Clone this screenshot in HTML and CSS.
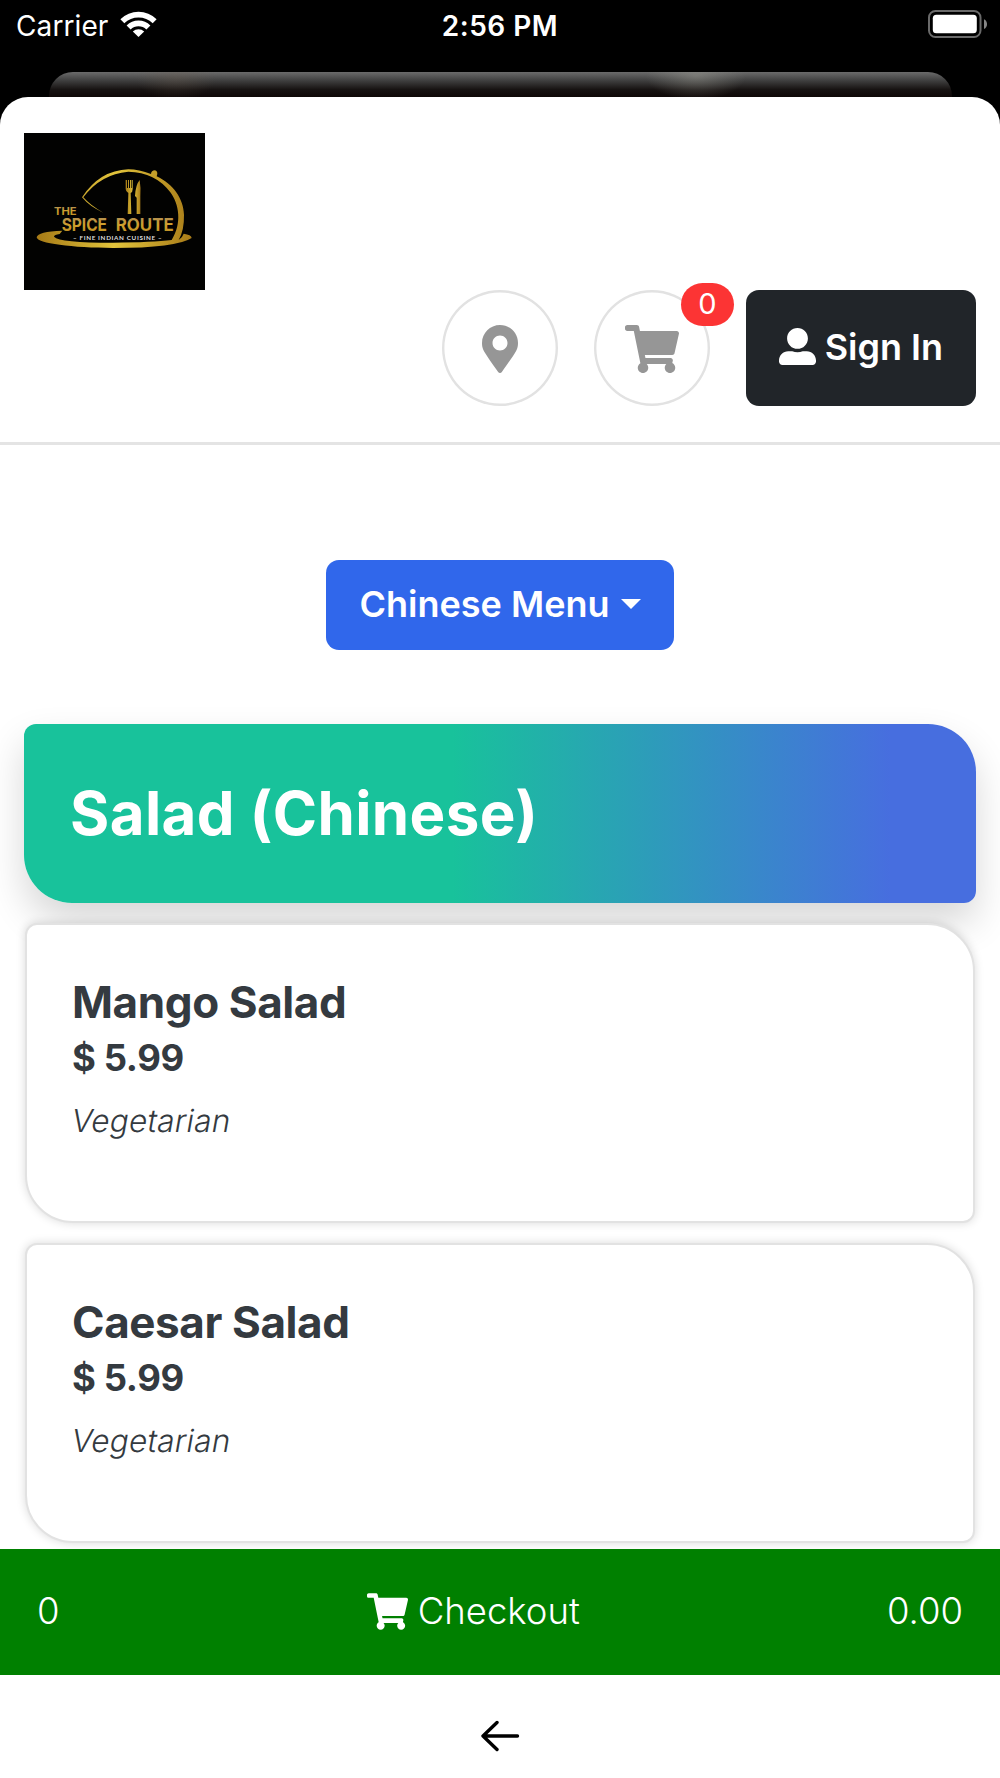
FILE: index.html
```html
<!DOCTYPE html>
<html lang="en">
<head>
<meta charset="utf-8">
<title>The Spice Route</title>
<link rel="stylesheet" href="styles.css">
</head>
<body>
<svg class="defs" aria-hidden="true">
  <symbol id="cart" viewBox="0 0 576 512"><path d="M528.12 301.319l47.273-208C578.806 78.301 567.391 64 551.99 64H159.208l-9.166-44.81C147.758 8.021 137.93 0 126.529 0H24C10.745 0 0 10.745 0 24v16c0 13.255 10.745 24 24 24h69.883l70.248 343.435C147.325 417.1 136 435.222 136 456c0 30.928 25.072 56 56 56s56-25.072 56-56c0-15.674-6.447-29.835-16.824-40h209.647C430.447 426.165 424 440.326 424 456c0 30.928 25.072 56 56 56s56-25.072 56-56c0-22.172-12.888-41.332-31.579-50.405l5.517-24.276c3.413-15.018-8.002-29.319-23.403-29.319H218.117l-6.545-32h293.145c11.206 0 20.92-7.754 23.403-18.681z"/></symbol>
</svg>
<div class="status">
  <div class="status-left">
    <span class="carrier">Carrier</span>
    <svg class="wifi" viewBox="0 0 37 27" fill="#fff">
      <path d="M0.4 9.2a26 26 0 0 1 36.2 0l-3.9 4a20.500 20.500 0 0 0-28.400 0z"/>
      <path d="M6.600 15.400a17.200 17.200 0 0 1 23.800 0l-4 4a11.500 11.500 0 0 0-15.800 0z"/>
      <path d="M12.800 21.600a8.300 8.300 0 0 1 11.400 0l-5.700 5.400z"/>
    </svg>
  </div>
  <span class="time">2:56 PM</span>
  <svg class="battery" viewBox="0 0 60 28">
    <rect x="1" y="1" width="51.500" height="26" rx="6.500" fill="none" stroke="#6a6a6a" stroke-width="2"/>
    <rect x="4.800" y="4.800" width="44" height="18.400" rx="3.500" fill="#fff"/>
    <path d="M56 9.200c4 1.800 4 8 0 9.800z" fill="#868686"/>
  </svg>
</div>
<div class="behind"></div>
<main class="sheet">
  <header class="header">
    <svg class="logo" viewBox="43 39 543 471">
      <defs>
        <linearGradient id="gold" x1="0" x2="1"><stop offset="0" stop-color="#a67a16"/><stop offset=".5" stop-color="#e2c43c"/><stop offset="1" stop-color="#a87b18"/></linearGradient>
        <linearGradient id="letter" x1="0" x2="0" y1="0" y2="1"><stop offset="0" stop-color="#a88a60"/><stop offset=".5" stop-color="#d0a02c"/><stop offset="1" stop-color="#b98a22"/></linearGradient>
      </defs>
      <rect x="43" y="39" width="543" height="471" fill="#020201"/>
      <path d="M281 278Q240 260 217 232Q270 151 356 148Q388 148 424 162Q425 151 436 151Q447 155 441 169C490 192 522 236 523 284Q524 330 507 360Q518 353 522 341Q545 344 546 354Q500 384 310 384C190 384 81 370 81 352Q84 334 158 332L150 342Q133 344 133 350Q150 368 310 368Q430 367 486 360C518 310 508 252 482 217Q438 157 356 155Q273 162 221 232Q244 258 281 278Z" fill="url(#gold)"/>
      <path d="M348 180h4v24h3v-24h3v24h3v-24h3v24h2v-24h3v27q0 9-6 12l2 63h-11l2-63q-8-4-8-12zM390 180q4 22 2 50v52h-11v-49l-5-5q2-34 14-48z" fill="url(#gold)"/>
      <g class="logo-text" fill="url(#letter)">
        <text x="133" y="284" font-size="32" textLength="68" lengthAdjust="spacingAndGlyphs">THE</text>
        <text x="156" y="334" font-size="52" textLength="136" lengthAdjust="spacingAndGlyphs">SPICE</text>
        <text x="318" y="334" font-size="52" textLength="174" lengthAdjust="spacingAndGlyphs">ROUTE</text>
      </g>
      <text class="logo-tagline" x="190" y="361" font-size="19" fill="#ddd" textLength="266">– FINE INDIAN CUISINE –</text>
    </svg>
    <nav class="actions">
      <a class="round"><svg class="pin" viewBox="0 0 384 512"><path d="M172.268 501.67C26.97 291.031 0 269.413 0 192 0 85.961 85.961 0 192 0s192 85.961 192 192c0 77.413-26.97 99.031-172.268 309.67-9.535 13.774-29.93 13.773-39.464 0zM192 272c44.183 0 80-35.817 80-80s-35.817-80-80-80-80 35.817-80 80 35.817 80 80 80z"/></svg></a>
      <a class="round cart"><svg class="cart-icon"><use href="#cart"/></svg><span class="badge">0</span></a>
      <a class="signin"><svg class="user" viewBox="0 0 512 512"><path d="M256 288c79.500 0 144-64.500 144-144S335.500 0 256 0 112 64.500 112 144s64.500 144 144 144zm128 32h-55.100c-22.200 10.200-46.900 16-72.900 16s-50.600-5.800-72.900-16H128C57.300 320 0 377.300 0 448v16c0 26.500 21.500 48 48 48h416c26.500 0 48-21.500 48-48v-16c0-70.700-57.300-128-128-128z"/></svg><span>Sign In</span></a>
    </nav>
  </header>
  <button class="menu-button"><span>Chinese Menu</span><i class="caret"></i></button>
  <section class="menu">
    <h1 class="category"><span>Salad (Chinese)</span></h1>
    <article class="item">
      <h2>Mango Salad</h2>
      <p class="price">$ 5.99</p>
      <p class="tag">Vegetarian</p>
    </article>
    <article class="item">
      <h2>Caesar Salad</h2>
      <p class="price">$ 5.99</p>
      <p class="tag">Vegetarian</p>
    </article>
  </section>
</main>
<footer>
  <div class="checkout">
    <span>0</span>
    <span class="checkout-label"><svg class="checkout-cart"><use href="#cart"/></svg><span>Checkout</span></span>
    <span>0.00</span>
  </div>
  <div class="toolbar"><svg class="back" viewBox="0 0 40 32"><path d="M37.500 16H3M17 2.500L3 16l14 13.500" fill="none" stroke="#000" stroke-width="3.400" stroke-linecap="round" stroke-linejoin="round"/></svg></div>
</footer>
</body>
</html>
```
FILE: styles.css
```css
* { box-sizing: border-box; }
body { margin: 0; height: 1778px; display: flex; flex-direction: column; overflow: hidden; background: #000; color: #343a40; font-family: Inter, "Liberation Sans", sans-serif; }
h1, h2, p { margin: 0; }
span { white-space: nowrap; }
.defs { display: none; }

.status { height: 72px; flex: none; display: grid; grid-template-columns: 1fr auto 1fr; align-items: start; padding: 10px 12px 0; color: #fff; font-size: 28px; line-height: 32px; }
.status-left { display: flex; gap: 12px; padding-left: 4px; }
.carrier { letter-spacing: .1px; }
.wifi { width: 37px; height: 27px; }
.time { font-weight: 600; letter-spacing: .5px; }
.battery { width: 60px; height: 28px; justify-self: end; }

.behind { height: 25px; flex: none; margin: 0 48.500px; border-radius: 24px 24px 0 0; background: radial-gradient(ellipse 50px 24px at 647px 4px, rgba(170,170,160,.4), transparent), radial-gradient(ellipse 40px 22px at 127px 6px, rgba(110,95,80,.3), transparent), linear-gradient(#6b6b6b, #3e3e3e 35%, #171312 70%, #0e0807); }

.sheet { flex: 1; min-height: 0; overflow: hidden; background: #fff; border-radius: 28px 28px 0 0; display: flex; flex-direction: column; align-items: center; }
.header { width: 100%; height: 348px; flex: none; padding: 36px 24px 0; border-bottom: 3px solid #e4e4e4; }
.logo { display: block; width: 181px; height: 157px; }
.logo-text { font-family: Inter, sans-serif; font-weight: 700; }
.logo-tagline { font-family: Lato, sans-serif; font-weight: 700; }
.actions { display: flex; justify-content: flex-end; gap: 36px; }
.round { width: 116px; height: 116px; box-shadow: inset 0 0 0 2.400px #e2e2e2; border-radius: 50%; display: flex; align-items: center; justify-content: center; padding-top: 2px; fill: #969696; }
.cart { position: relative; }
.pin { width: 36px; height: 48px; }
.cart-icon { width: 54px; height: 48px; }
.badge { position: absolute; left: 87px; top: -7.500px; width: 53.500px; height: 43.500px; border-radius: 22px; background: #fc3434; color: #fff; font-size: 29px; line-height: 42px; text-align: center; }
.signin { width: 230.300px; height: 116px; padding-bottom: 2px; border-radius: 13px; background: #212529; color: #fff; fill: #fff; display: flex; align-items: center; justify-content: center; gap: 9px; font-size: 36px; font-weight: 600; }
.user { width: 37px; height: 37px; margin-top: -1px; }

.menu-button { flex: none; margin-top: 114.500px; width: 348px; height: 90.500px; border: 0; padding: 0 0 2px; border-radius: 13px; background: #3067eb; color: #fff; font: 600 36px Inter, sans-serif; display: flex; align-items: center; justify-content: center; gap: 11px; }
.caret { border: 10px solid transparent; border-top-color: #fff; border-bottom: 0; }

.menu { width: 100%; padding: 74px 24px 0; display: flex; flex-direction: column; gap: 20px; }
.category { height: 179px; flex: none; padding-left: 46px; border-radius: 12px 48px 12px 48px; background: linear-gradient(90deg, #18c29b 45%, #476edf 91%); box-shadow: 0 19px 38px rgba(0,0,0,.16); color: #fff; font-size: 60px; font-weight: 700; line-height: 178px; letter-spacing: .4px; }
.item { height: 300px; flex: none; margin: 0 1px; padding: 51px 45px 0; border: 2px solid #e2e2e2; border-radius: 12px 48px 12px 48px; background: #fff; box-shadow: 0 0 10px rgba(0,0,0,.15); }
.item h2 { font-size: 44px; line-height: 53px; letter-spacing: -.4px; }
.price { font-size: 36.500px; font-weight: 700; line-height: 58px; letter-spacing: -.4px; }
.tag { width: max-content; margin-top: 11px; font-size: 31.500px; font-weight: 300; line-height: 46px; letter-spacing: .2px; transform: skewX(-10deg); }

footer { flex: none; background: #fff; }
.checkout { height: 125.500px; padding: 0 37px 1px; background: #008000; color: #fff; fill: #fff; display: flex; align-items: center; justify-content: space-between; font-size: 36.500px; font-weight: 300; }
.checkout-label { display: flex; align-items: center; gap: 10px; }
.checkout-cart { width: 41px; height: 37px; }
.toolbar { height: 103.500px; display: flex; justify-content: center; padding-top: 45px; }
.back { width: 40px; height: 32px; }
```
